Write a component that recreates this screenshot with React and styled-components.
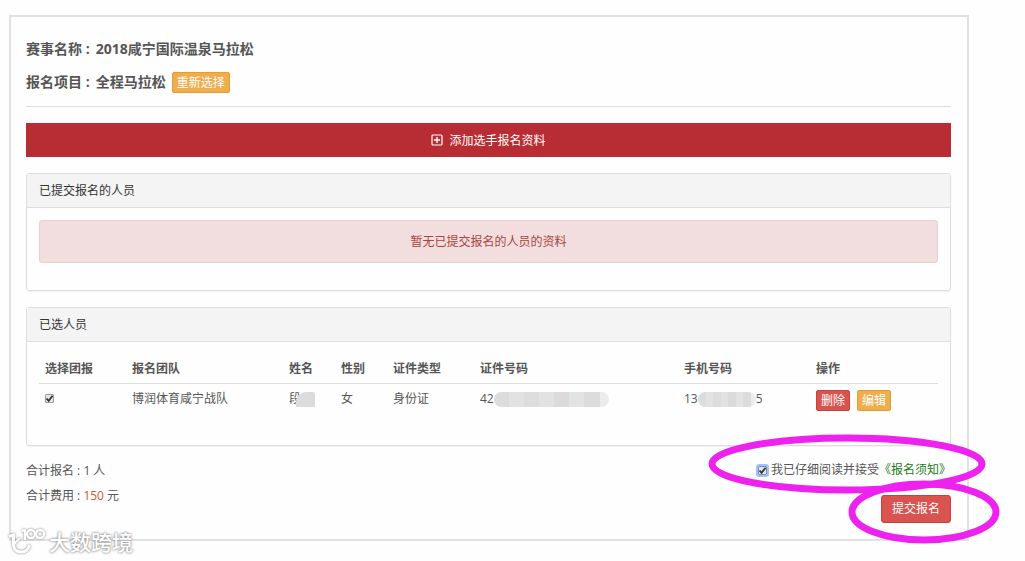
import React, { useState } from 'react'
import styled, { createGlobalStyle } from 'styled-components'

const GlobalStyle = createGlobalStyle`
  * {
    box-sizing: border-box;
  }

  body {
    margin: 0;
    background: #fefefe;
    color: #555;
    font-family: 'Open Sans', 'Noto Sans CJK SC', sans-serif;
    font-size: 12px;
    line-height: 18px;
  }

  button,
  input {
    font-family: inherit;
    font-size: inherit;
  }
`

const Page = styled.div`
  position: relative;
  padding: 15px 56px 20px 9px;
`

const Frame = styled.main`
  padding: 15px 16px 16px 15px;
  border: 2px solid #e1e1e1;
`

const Heading = styled.header`
  display: flex;
  flex-direction: column;
  gap: 11px;
  padding: 6px 0 13px;
  margin-bottom: 16px;
  border-bottom: 1px solid #ddd;
`

const Line = styled.h1`
  display: flex;
  align-items: center;
  gap: 6px;
  margin: 0;
  font-size: 14px;
  font-weight: 700;
  line-height: 22px;
`

const colours = {
  danger: { fill: '#d9534f', edge: '#c9403c' },
  warning: { fill: '#f0ad4e', edge: '#e39c36' },
}

const Button = styled.button`
  padding: ${props => (props.$small ? '0 4px' : '4px 10px')};
  border: 1px solid ${props => colours[props.$kind].edge};
  border-radius: ${props => (props.$small ? '2px' : '3px')};
  background: ${props => colours[props.$kind].fill};
  color: #fff;
  font-size: 12px;
  line-height: ${props => (props.$small ? '19px' : '18px')};
  cursor: pointer;
`

const AddButton = styled.button`
  display: flex;
  align-items: center;
  justify-content: center;
  gap: 6px;
  width: 100%;
  height: 34px;
  padding: 0;
  border: 0;
  background: #b82d33;
  color: #fff;
  cursor: pointer;
`

const Panel = styled.section`
  margin-top: 16px;
  border: 1px solid #ddd;
  border-radius: 3px;
  box-shadow: 0 1px 1px rgba(0, 0, 0, 0.05);
`

const PanelTitle = styled.h2`
  margin: 0;
  padding: 8px 12px;
  border-bottom: 1px solid #ddd;
  background: #f4f4f4;
  color: #333;
  font-size: 12px;
  font-weight: 400;
  line-height: 17px;
`

const PanelBody = styled.div`
  padding: 12px 12px 27px;
`

const Alert = styled.div`
  padding: 12px;
  border: 1px solid #e8cfd1;
  border-radius: 3px;
  background: #f2dede;
  color: #a94442;
  line-height: 17px;
  text-align: center;
`

const Table = styled.table`
  width: 100%;
  border-collapse: collapse;
  table-layout: fixed;

  th,
  td {
    padding: 6px;
    text-align: left;
    vertical-align: top;
    white-space: nowrap;
  }

  th {
    border-bottom: 1px solid #ddd;
    line-height: 17px;
  }

  td {
    padding-bottom: 7px;
  }
`

const Masked = styled.span`
  display: inline-flex;
  align-items: center;
`

const Smudge = styled.span`
  width: ${props => props.$width}px;
  height: 15px;
  margin-left: ${props => (props.$round ? '0' : '-5px')};
  border-radius: ${props => (props.$round ? '8px' : '10px 2px 0 0')};
  background: ${props => (props.$round
    ? 'linear-gradient(90deg, #dcdcdc 13%, #e1e3e3 13% 26%, #dfdddb 26% 39%, #e1e2e3 39% 52%, #dcdada 52% 65%, #e1e3e4 65% 78%, #dcdcdc 78% 92%, #ececec 92%)'
    : '#dcdcdc')};
`

const Actions = styled.div`
  display: flex;
  gap: 7px;
`

const Footer = styled.footer`
  display: flex;
  justify-content: space-between;
  padding-top: 12px;
`

const Totals = styled.div`
  p {
    margin: 0;
    line-height: 25px;
  }
`

const Price = styled.span`
  color: #d0572d;
`

const Submit = styled.div`
  display: flex;
  flex-direction: column;
  align-items: flex-end;
  gap: 16px;
  padding-top: 3px;
`

const Agree = styled.label`
  display: flex;
  align-items: center;
`

const Tick = styled.input`
  appearance: none;
  display: block;
  width: 9px;
  height: 9px;
  margin: ${props => (props.$focused ? '0 4px 0 0' : '4px 0')};
  border: 1px solid ${props => (props.$focused ? '#6f8fc0' : '#999')};
  border-radius: 1px;
  outline: ${props => (props.$focused ? '2px solid #a3c3f5' : 'none')};
  background: #eee;

  &:checked {
    background: #e6e6e6 url("data:image/svg+xml,%3Csvg xmlns='http://www.w3.org/2000/svg' viewBox='0 0 9 9'%3E%3Cpath d='M1.5 4.5 3.6 6.8 7.6 1.8' fill='none' stroke='%23333' stroke-width='1.8'/%3E%3C/svg%3E") border-box center / 9px no-repeat;
  }
`

const Rules = styled.a`
  color: #1b7a1b;
  text-decoration: none;
`

const Marker = styled.svg`
  position: absolute;
  top: 430px;
  right: 20px;
  pointer-events: none;
`

const Watermark = styled.div`
  position: absolute;
  bottom: 4px;
  left: 8px;
  display: flex;
  align-items: center;
  gap: 3px;
  color: #fff;
  font-size: 21px;
  font-weight: 500;
  line-height: 30px;
  text-shadow: 0 0 2px #888, 0 0 3px #999;

  svg {
    filter: drop-shadow(0 0 1px #777);
  }
`

const columns = [
  ['选择团报', 87],
  ['报名团队', 157],
  ['姓名', 52],
  ['性别', 52],
  ['证件类型', 87],
  ['证件号码', 204],
  ['手机号码', 132],
  ['操作', 128],
]

function PlusIcon () {
  return (
    <svg width="12" height="12" viewBox="0 0 12 12" fill="none" stroke="#fff" aria-hidden="true">
      <rect x="1" y="1" width="10" height="10" rx="1" strokeWidth="1.2" />
      <path d="M6 3v6M3 6h6" strokeWidth="1.4" />
    </svg>
  )
}

function Logo () {
  return (
    <svg width="38" height="30" viewBox="0 0 38 30" fill="none" stroke="#fff" strokeWidth="3" aria-hidden="true">
      <path d="M1 9.5 5.5 8v9c0 5 3 8 7.500 8 4.500 0 7.500-2.500 8.500-7" />
      <path d="M6 17l6-6" strokeWidth="2.4" />
      <path d="M14 3.5h3V13" strokeWidth="2.4" />
      <circle cx="23" cy="7" r="4" strokeWidth="2.4" />
      <circle cx="32" cy="7" r="4" strokeWidth="2.4" />
    </svg>
  )
}

function Markers () {
  return (
    <Marker width="300" height="120" fill="none" stroke="#ee22ee" strokeWidth="7" aria-hidden="true">
      <ellipse cx="142" cy="34" rx="135" ry="26" />
      <ellipse cx="219" cy="82" rx="72" ry="28" />
    </Marker>
  )
}

function Selected () {
  const [checked, setChecked] = useState(true)

  return (
    <Table>
      <colgroup>
        {columns.map(([name, width]) => (
          <col key={name} style={{ width: `${width / 8.99}%` }} />
        ))}
      </colgroup>
      <thead>
        <tr>
          {columns.map(([name]) => <th key={name}>{name}</th>)}
        </tr>
      </thead>
      <tbody>
        <tr>
          <td>
            <Tick
              type="checkbox"
              aria-label="选择团报"
              checked={checked}
              onChange={e => setChecked(e.target.checked)}
            />
          </td>
          <td>博润体育咸宁战队</td>
          <td><Masked>段<Smudge $width={19} /></Masked></td>
          <td>女</td>
          <td>身份证</td>
          <td><Masked>42<Smudge $width={115} $round /></Masked></td>
          <td><Masked>13<Smudge $width={58} $round />5</Masked></td>
          <td>
            <Actions>
              <Button type="button" $kind="danger" $small>删除</Button>
              <Button type="button" $kind="warning" $small>编辑</Button>
            </Actions>
          </td>
        </tr>
      </tbody>
    </Table>
  )
}

export default function App () {
  const [agreed, setAgreed] = useState(true)

  return (
    <Page>
      <GlobalStyle />
      <Frame>
        <Heading>
          <Line>
            <span>赛事名称 :</span>
            <span>2018咸宁国际温泉马拉松</span>
          </Line>
          <Line>
            <span>报名项目 :</span>
            <span>全程马拉松</span>
            <Button type="button" $kind="warning" $small>重新选择</Button>
          </Line>
        </Heading>
        <AddButton type="button">
          <PlusIcon />
          添加选手报名资料
        </AddButton>
        <Panel>
          <PanelTitle>已提交报名的人员</PanelTitle>
          <PanelBody>
            <Alert>暂无已提交报名的人员的资料</Alert>
          </PanelBody>
        </Panel>
        <Panel>
          <PanelTitle>已选人员</PanelTitle>
          <PanelBody>
            <Selected />
          </PanelBody>
        </Panel>
        <Footer>
          <Totals>
            <p>合计报名 : 1 人</p>
            <p>合计费用 : <Price>150</Price> 元</p>
          </Totals>
          <Submit>
            <Agree>
              <Tick
                type="checkbox"
                $focused
                checked={agreed}
                onChange={e => setAgreed(e.target.checked)}
              />
              我已仔细阅读并接受
              <Rules href="#rules">《报名须知》</Rules>
            </Agree>
            <Button type="submit" $kind="danger">提交报名</Button>
          </Submit>
        </Footer>
      </Frame>
      <Markers />
      <Watermark>
        <Logo />
        大数跨境
      </Watermark>
    </Page>
  )
}
